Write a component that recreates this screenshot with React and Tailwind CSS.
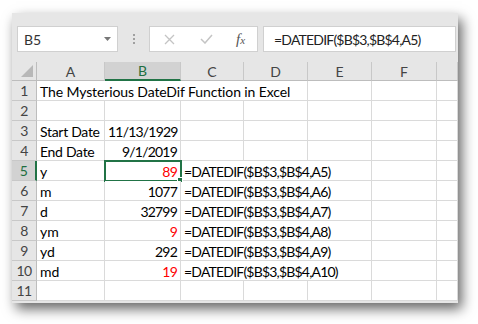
import React from "react";

const FONT = { fontFamily: "Lato, 'Open Sans', sans-serif" };

const cols = ["A", "B", "C", "D", "E", "F", ""];

const formulaRows = [
  { n: 5, a: "y", b: "89", red: true },
  { n: 6, a: "m", b: "1077" },
  { n: 7, a: "d", b: "32799" },
  { n: 8, a: "ym", b: "9", red: true },
  { n: 9, a: "yd", b: "292" },
  { n: 10, a: "md", b: "19", red: true },
];

function RowHead({ n, selected }) {
  return (
    <div
      className={`flex items-center justify-center border-b border-[#c8c8c8] text-[14px] tracking-[-0.5px] ${
        selected
          ? "bg-[#d2d2d2] border-r-2 border-r-[#217346] text-[#1e6e40]"
          : "bg-[#e6e6e6] border-r border-r-[#bdbdbd] text-[#444]"
      }`}
    >
      {n}
    </div>
  );
}

function Cell({ children, red, className = "" }) {
  return (
    <div
      className={`border-r border-b border-[#dadada] bg-white px-[3px] pt-[1px] text-[14px] leading-[19px] whitespace-nowrap ${
        red ? "text-[#ff0000]" : "text-black"
      } ${className}`}
    >
      {children}
    </div>
  );
}

function FormulaBar() {
  return (
    <div className="flex items-center h-[26px] mt-[13px] pl-[5px] pr-[2px]">
      <div className="flex items-center justify-between w-[101px] h-[26px] bg-white border border-[#d0d0d0] pl-[6px] pr-[6px]">
        <span className="text-[14px] text-[#333]" style={FONT}>B5</span>
        <svg width="7" height="4" viewBox="0 0 7 4">
          <path d="M0 0 L7 0 L3.5 4 Z" fill="#777" />
        </svg>
      </div>
      <div className="flex flex-col items-center gap-[2px] w-[31px]">
        <span className="w-[2px] h-[2px] bg-[#a0a0a0]" />
        <span className="w-[2px] h-[2px] bg-[#a0a0a0]" />
        <span className="w-[2px] h-[2px] bg-[#a0a0a0]" />
      </div>
      <div className="flex items-center w-[109px] h-[26px] bg-white border border-[#d0d0d0]">
        <div className="w-[38px] flex justify-center">
          <svg width="11" height="11" viewBox="0 0 11 11">
            <path d="M1 1 L10 10 M10 1 L1 10" stroke="#c4c4c4" strokeWidth="1.3" />
          </svg>
        </div>
        <div className="w-[36px] flex justify-center">
          <svg width="13" height="10" viewBox="0 0 13 10">
            <path d="M1 5 L5 9 L12 1" stroke="#c4c4c4" strokeWidth="1.5" fill="none" />
          </svg>
        </div>
        <div className="w-[33px] flex justify-center">
          <span
            className="italic text-[15px] text-[#555]"
            style={{ fontFamily: "'Liberation Serif', serif" }}
          >
            f<span className="text-[11px]">x</span>
          </span>
        </div>
      </div>
      <div className="flex-1 ml-[5px] h-[26px] bg-white border border-[#d0d0d0] pl-[10px] flex items-center">
        <span className="text-[14px] tracking-[-0.8px] text-[#222]" style={FONT}>=DATEDIF($B$3,$B$4,A5)</span>
      </div>
    </div>
  );
}

function Sheet() {
  return (
    <div
      className="grid mt-[10px] grid-cols-[25px_68px_76px_63px_64px_64px_65px_21px] grid-rows-[19px_repeat(11,20px)]"
      style={FONT}
    >
      {/* header row */}
      <div className="relative bg-[#e6e6e6] border-r border-b border-[#bdbdbd]">
        <svg className="absolute right-[3px] bottom-[3px]" width="12" height="12" viewBox="0 0 12 12">
          <path d="M12 0 L12 12 L0 12 Z" fill="#b8b8b8" />
        </svg>
      </div>
      {cols.map((c) => (
        <div
          key={c || "g"}
          className={`flex items-center justify-center text-[14px] border-r border-[#c8c8c8] ${
            c === "B"
              ? "bg-[#d2d2d2] border-b-2 border-b-[#217346] text-[#1e6e40]"
              : "bg-[#e6e6e6] border-b border-b-[#bdbdbd] text-[#444]"
          }`}
        >
          {c}
        </div>
      ))}

      {/* row 1 */}
      <RowHead n={1} />
      <Cell className="col-span-4 tracking-[-0.12px]">The Mysterious DateDif Function in Excel</Cell>
      <Cell />
      <Cell />
      <Cell />

      {/* row 2 */}
      <RowHead n={2} />
      {cols.map((c, i) => <Cell key={i} />)}

      {/* row 3 */}
      <RowHead n={3} />
      <Cell className="tracking-[-0.3px]">Start Date</Cell>
      <Cell className="text-right tracking-[-0.8px]">11/13/1929</Cell>
      {cols.slice(2).map((c, i) => <Cell key={i} />)}

      {/* row 4 */}
      <RowHead n={4} />
      <Cell className="tracking-[-0.3px]">End Date</Cell>
      <Cell className="text-right tracking-[-0.8px]">9/1/2019</Cell>
      {cols.slice(2).map((c, i) => <Cell key={i} />)}

      {formulaRows.map((r) => (
        <React.Fragment key={r.n}>
          <RowHead n={r.n} selected={r.n === 5} />
          <Cell>{r.a}</Cell>
          <Cell red={r.red} className="relative text-right tracking-[-0.8px]">
            {r.b}
            {r.n === 5 && (
              <>
                <div className="absolute -left-[1px] -top-[1px] w-[78px] h-[22px] border-2 border-[#217346]" />
                <div className="absolute -right-[3px] -bottom-[3px] w-[6px] h-[6px] bg-[#217346] border border-white" />
              </>
            )}
          </Cell>
          <Cell className="col-span-3 tracking-[-0.8px]">=DATEDIF($B$3,$B$4,A{r.n})</Cell>
          <Cell />
          <Cell />
        </React.Fragment>
      ))}

      {/* row 11 */}
      <RowHead n={11} />
      {cols.map((c, i) => <Cell key={i} />)}
    </div>
  );
}

export default function App() {
  return (
    <div className="w-[478px] h-[324px] bg-white pl-[12px] pt-[13px]">
      <div className="w-[446px] h-[290px] bg-[#e6e6e6] overflow-hidden shadow-[4px_6px_12px_rgba(0,0,0,0.6)]">
        <FormulaBar />
        <Sheet />
      </div>
    </div>
  );
}
